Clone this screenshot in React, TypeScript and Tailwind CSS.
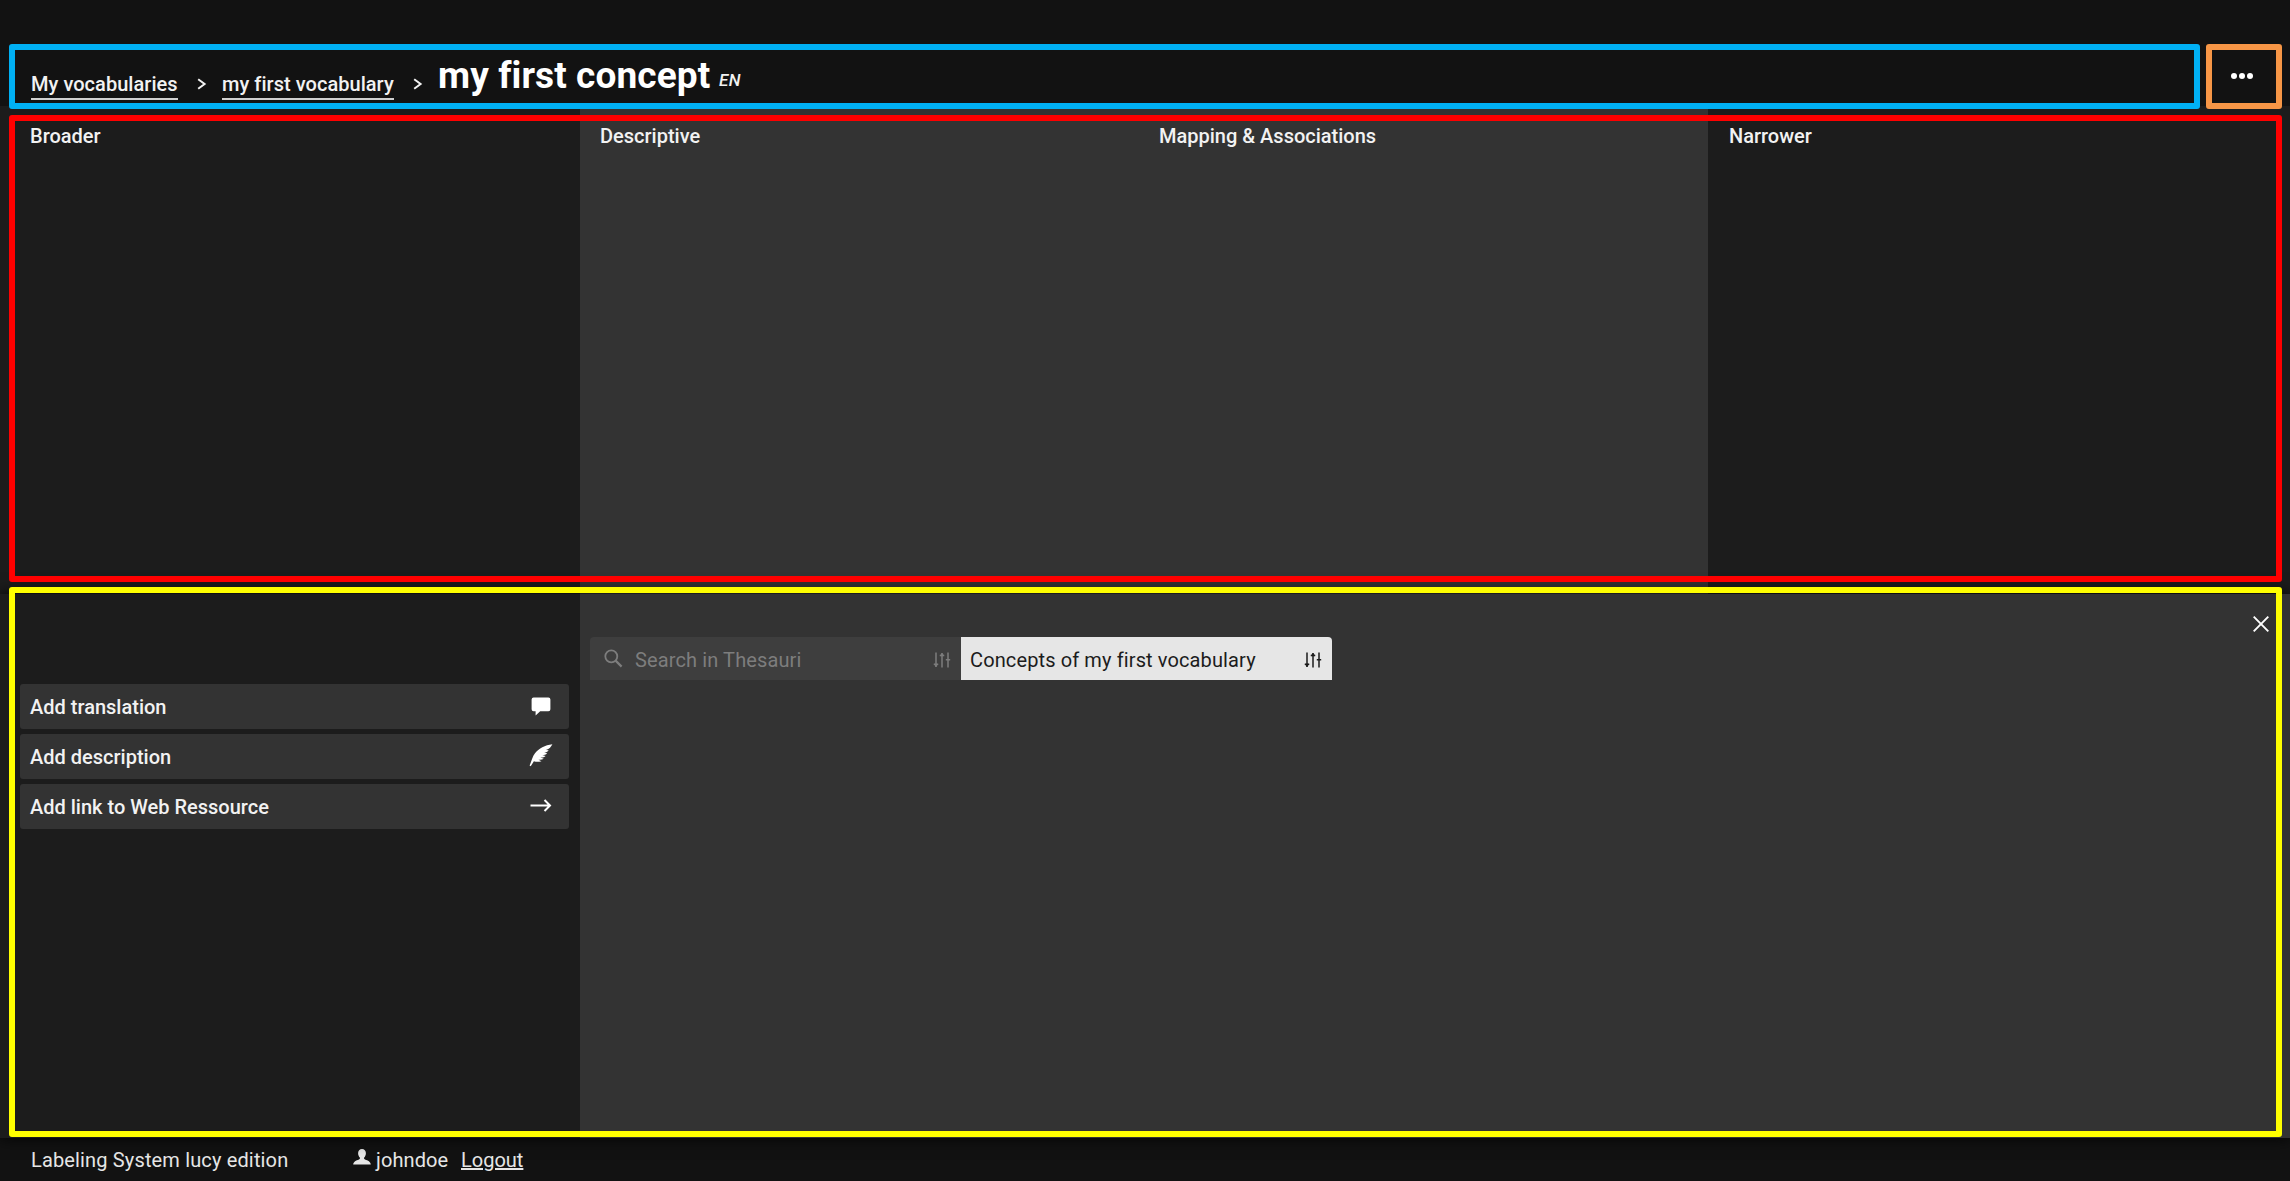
import React from "react";

const Chevron = ({ className = "" }: { className?: string }) => (
  <svg className={className} width="10" height="12" viewBox="0 0 10 12" fill="none" stroke="#f2f2f2" strokeWidth="2">
    <path d="M1.2 1.2 7.6 6 1.2 10.8" />
  </svg>
);

const Sliders = ({ className = "" }: { className?: string }) => (
  <svg className={className} width="18" height="16" viewBox="0 0 18 16" fill="none" stroke="currentColor" strokeWidth="1.5">
    <path d="M3 .5V15M9 1v14.5M15 .5v15M.8 12.3h4.4M6.8 3.6h4.4M12.8 7.7h4.4" />
    <path d="M1.2 12.3 3 14.8l1.8-2.5zM7.2 3.6 9 1.2l1.8 2.4z" fill="currentColor" strokeWidth=".5" />
  </svg>
);

const Comment = () => (
  <svg className="translate-y-px" width="20" height="19" viewBox="0 0 20 19" fill="#fff">
    <path d="M2.6.5h14.8a2 2 0 0 1 2 2v9.8a2 2 0 0 1-2 2H9.2L4.6 18.4v-4.1h-2a2 2 0 0 1-2-2V2.5a2 2 0 0 1 2-2z" />
  </svg>
);

const Feather = () => (
  <svg width="24" height="23" viewBox="0 0 24 23" fill="#fff">
    <path d="M23.4.3C16 1.200 9.800 4.600 6 9.200 3.400 12.500 2.600 16.800.6 21.600l1.100.7 3.200-5c2.300.8 5 .7 7.600 0L9.500 15.700c1.900.3 3.700 0 5.300-1l-3.500-1.200c2.100.2 3.800-.2 5.300-1.500l-3.300-.9c2 0 3.600-.5 4.900-1.900l-3-.5c1.900-.1 3.400-.9 4.500-2.400l-2.700-.2C20.600 4.800 22 2.900 23.400.3z" />
  </svg>
);

const Arrow = () => (
  <svg width="22" height="13" viewBox="0 0 22 13" fill="none" stroke="#fff" strokeWidth="2">
    <path d="M.5 6.500H20M14.500 1 20 6.500l-5.500 5.500" />
  </svg>
);

const Person = () => (
  <svg width="18" height="16" viewBox="0 0 18 16" fill="#e6e6e6">
    <path d="M9 0c2.400 0 3.900 1.700 3.900 4 0 1.900-.7 3.600-1.700 4.500-.4.900-.1 1.500.8 1.900 3 1.100 5.500 2 5.800 5.100H.2c.3-3.100 2.800-4 5.800-5.100.9-.4 1.200-1 .8-1.900C5.800 7.600 5.100 5.900 5.100 4 5.100 1.700 6.600 0 9 0z" />
  </svg>
);

const actions = [
  { label: "Add translation", icon: <Comment /> },
  { label: "Add description", icon: <Feather /> },
  { label: "Add link to Web Ressource", icon: <Arrow /> },
];

export default function App() {
  return (
    <div className="relative flex h-[1181px] w-[2290px] flex-col overflow-hidden bg-[#121212] font-['Roboto',sans-serif] text-[20px] leading-6 font-medium text-[#f2f2f2]">
      <header className="flex h-[106px] shrink-0 items-start justify-between pr-[37px] pl-[31px]">
        <nav className="flex items-start">
          <a className="mt-[72px] h-[28px] w-[147px] border-b-2 border-[#d0d0d0] tracking-[0.04px] whitespace-nowrap">My vocabularies</a>
          <Chevron className="mt-[78px] ml-[19px]" />
          <a className="mt-[72px] ml-[15px] h-[28px] w-[172px] border-b-2 border-[#d0d0d0] tracking-[0.04px] whitespace-nowrap">my first vocabulary</a>
          <Chevron className="mt-[78px] ml-[19px]" />
          <h1 className="mt-[53px] ml-[15px] w-[272px] text-[37px] leading-[46px] font-bold tracking-[0.1px] whitespace-nowrap text-white">my first concept</h1>
          <span className="mt-[68px] ml-[9px] text-[17px] tracking-[0.5px] italic">EN</span>
        </nav>
        <button className="mt-[73px] flex gap-[2px]">
          <i className="size-[6px] rounded-full bg-white" />
          <i className="size-[6px] rounded-full bg-white" />
          <i className="size-[6px] rounded-full bg-white" />
        </button>
      </header>

      <main className="flex h-[488px] shrink-0 bg-[#1c1c1c]">
        <section className="w-[580px] pt-[18px] pl-[30px]">
          <h2>Broader</h2>
        </section>
        <section className="flex w-[1128px] bg-[#333333] pt-[18px]">
          <h2 className="w-[579px] pl-5">Descriptive</h2>
          <h2>Mapping &amp; Associations</h2>
        </section>
        <section className="pt-[18px] pl-[21px]">
          <h2>Narrower</h2>
        </section>
      </main>

      <div className="relative flex h-[544px] shrink-0 bg-[#333333] shadow-[0_0_15px_rgba(0,0,0,0.9)]">
        <aside className="flex w-[580px] flex-col gap-[5px] bg-[#1c1c1c] pt-[90px] pr-[11px] pl-5">
          {actions.map((a) => (
            <button key={a.label} className="flex h-[45px] shrink-0 items-center justify-between rounded-[3px] bg-[#333333] pr-3 pl-[10px] text-left">
              <span>{a.label}</span>
              <span className="flex w-8 -translate-y-px justify-center">{a.icon}</span>
            </button>
          ))}
        </aside>
        <section className="flex flex-1 items-start pt-[43px] pl-[10px] font-normal tracking-[0.12px]">
          <div className="flex h-[43px] w-[371px] items-center rounded-tl-[4px] bg-[#3e3e3e] pr-[10px] pl-[14px] text-[#7d7d7d]">
            <svg width="19" height="19" viewBox="0 0 19 19" fill="none" stroke="currentColor" strokeWidth="1.800">
              <circle cx="7.300" cy="7.300" r="6" />
              <path d="m11.600 11.600 6 6" strokeWidth="2.200" />
            </svg>
            <span className="ml-[12px] flex-1 pt-[2px]">Search in Thesauri</span>
            <Sliders className="mt-[3px]" />
          </div>
          <div className="flex h-[43px] w-[371px] items-center rounded-tr-[4px] bg-[#e6e6e6] pr-[10px] pl-[9px] text-[#1c1c1c]">
            <span className="flex-1 pt-[2px]">Concepts of my first vocabulary</span>
            <Sliders className="mt-[3px]" />
          </div>
        </section>
        <button className="mt-[22px] mr-[21px] h-4">
          <svg width="16" height="16" viewBox="0 0 16 16" stroke="#fff" strokeWidth="1.900"><path d="m.7.7 14.600 14.600M15.300.7.7 15.300" /></svg>
        </button>
      </div>

      <footer className="flex flex-1 items-start pt-[10px] pl-[31px] font-normal text-[#e6e6e6]">
        <span className="w-[322px] tracking-[0.15px]">Labeling System lucy edition</span>
        <span className="mt-[1px]"><Person /></span>
        <span className="ml-[5px] w-[85px] tracking-[0.1px]">johndoe</span>
        <a className="underline">Logout</a>
      </footer>

      <div className="pointer-events-none absolute top-[44px] left-[9px] h-[65px] w-[2191px] rounded-[3px] border-6 border-[#00b0f4]" />
      <div className="pointer-events-none absolute top-[44px] left-[2206px] h-[65px] w-[76px] rounded-[3px] border-6 border-[#f79646]" />
      <div className="pointer-events-none absolute top-[115px] left-[9px] h-[467px] w-[2273px] rounded-[3px] border-6 border-[#ff0000]" />
      <div className="pointer-events-none absolute top-[587px] left-[9px] h-[550px] w-[2273px] rounded-[3px] border-6 border-[#ffff00]" />
    </div>
  );
}
